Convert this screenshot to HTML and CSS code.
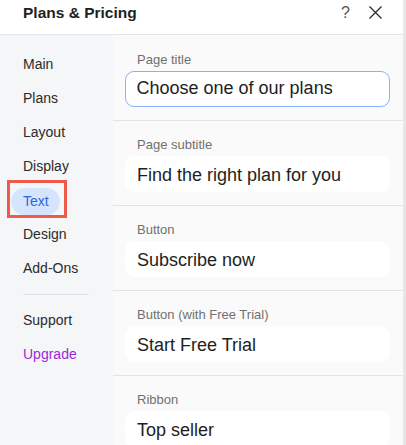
FILE: index.html
```html
<!DOCTYPE html>
<html lang="en">
<head>
<meta charset="utf-8">
<title>Plans &amp; Pricing</title>
<link rel="stylesheet" href="styles.css">
</head>
<body>
<div class="app">
  <div class="panel">
    <header class="header">
      <h1 class="title">Plans &amp; Pricing</h1>
      <div class="actions">
        <span class="help">?</span>
        <svg class="close" width="13" height="13" viewBox="0 0 13 13"><path d="M0.5 0.5 L12.5 12.5 M12.5 0.5 L0.5 12.5" stroke="#2b2b2b" stroke-width="1.3" fill="none"/></svg>
      </div>
    </header>
    <div class="body">
      <nav class="sidebar">
        <div class="nav-item">Main</div>
        <div class="nav-item">Plans</div>
        <div class="nav-item">Layout</div>
        <div class="nav-item">Display</div>
        <div class="nav-item active"><span class="pill">Text</span><span class="mark"></span></div>
        <div class="nav-item">Design</div>
        <div class="nav-item">Add-Ons</div>
        <div class="nav-sep"></div>
        <div class="nav-item">Support</div>
        <div class="nav-item upgrade">Upgrade</div>
      </nav>
      <main class="content">
        <section class="field first">
          <div class="label">Page title</div>
          <div class="input focused">Choose one of our plans</div>
        </section>
        <section class="field">
          <div class="label">Page subtitle</div>
          <div class="input">Find the right plan for you</div>
        </section>
        <section class="field">
          <div class="label">Button</div>
          <div class="input">Subscribe now</div>
        </section>
        <section class="field">
          <div class="label">Button (with Free Trial)</div>
          <div class="input">Start Free Trial</div>
        </section>
        <section class="field">
          <div class="label">Ribbon</div>
          <div class="input">Top seller</div>
        </section>
      </main>
    </div>
  </div>
  <div class="scrollbar"></div>
</div>
</body>
</html>
```
FILE: styles.css
```css
* { box-sizing: border-box; }
html, body { margin: 0; padding: 0; }
body {
  width: 406px;
  height: 445px;
  overflow: hidden;
  font-family: "Liberation Sans", Arial, sans-serif;
  background: #ffffff;
  color: #222;
}
.app {
  display: flex;
  width: 406px;
  height: 445px;
}
.panel {
  flex: 1;
  display: flex;
  flex-direction: column;
  min-width: 0;
}
.scrollbar {
  width: 3px;
  background: #e7e7e7;
}
.header {
  height: 35px;
  flex: none;
  display: flex;
  align-items: center;
  justify-content: space-between;
  padding: 0 21px 0 23px;
  border-bottom: 1px solid #e3e6ea;
  background: #fff;
}
.title {
  margin: 0;
  font-size: 15.5px;
  font-weight: bold;
  color: #1f1f1f;
  padding-bottom: 9px;
}
.actions {
  display: flex;
  align-items: center;
  gap: 19px;
  padding-bottom: 9px;
}
.help {
  font-size: 16px;
  color: #555;
  line-height: 16px;
}
.close { display: block; }
.body {
  flex: 1;
  display: flex;
  min-height: 0;
}
.sidebar {
  width: 113px;
  flex: none;
  background: #f5f6f7;
  padding-top: 12px;
}
.nav-item {
  position: relative;
  height: 34px;
  line-height: 34px;
  padding-left: 23px;
  font-size: 14px;
  color: #2b2b2b;
}
.nav-item.active {
  padding-left: 11px;
  display: flex;
  align-items: center;
}
.pill {
  display: inline-block;
  height: 27px;
  line-height: 27px;
  padding: 0 11px 0 12px;
  border-radius: 14px;
  background: #d5e5fd;
  color: #2f66dc;
  margin-top: 2px;
}
.mark {
  position: absolute;
  left: 7px;
  top: -3px;
  width: 60px;
  height: 38px;
  border: 3px solid #ee5a4c;
}
.nav-sep {
  height: 1px;
  background: #dfe3e8;
  margin: 9px 24px 8px 23px;
}
.upgrade { color: #9b2ad6; }
.content {
  flex: 1;
  background: #fafafa;
  overflow: hidden;
}
.field {
  height: 85px;
  padding: 16px 13px 0 12px;
  border-bottom: 1px solid #e4e4e4;
}
.field.first {
  height: 86px;
  padding-top: 17px;
}
.label {
  height: 16px;
  line-height: 16px;
  font-size: 13px;
  color: #707070;
  padding-left: 12px;
  margin-bottom: 3px;
}
.input {
  height: 36px;
  line-height: 36px;
  border-radius: 9px;
  background: #fff;
  border: 1px solid #fff;
  padding-left: 11px;
  font-size: 18px;
  color: #1e1e1e;
}
.input.focused {
  border: 1.5px solid #84b3fb;
  padding-left: 10.5px;
  line-height: 33px;
}
```
